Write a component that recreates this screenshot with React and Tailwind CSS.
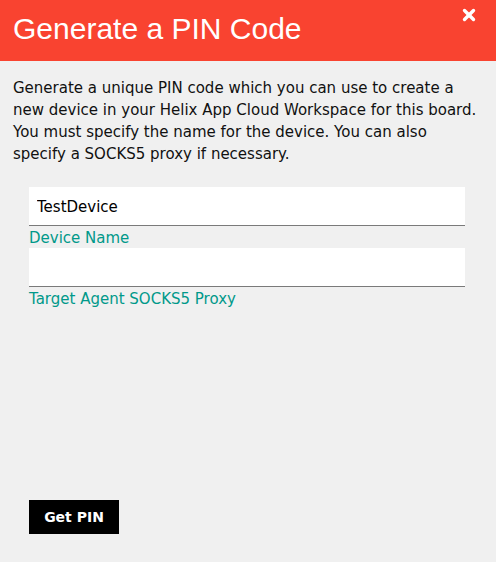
import { X } from 'lucide-react'

export default function App() {
  return (
    <div className="flex h-[562px] w-[496px] flex-col bg-[#f0f0f0] font-['DejaVu_Sans',Verdana,sans-serif]">
      <header className="relative flex h-[61px] shrink-0 items-center bg-[#f94330] px-[13px]">
        <h1 className="mt-[-3px] font-['Liberation_Sans',Arial,sans-serif] text-[30px] leading-none text-white">
          Generate a PIN Code
        </h1>
        <button className="absolute right-[18px] top-[6px] text-white" aria-label="Close">
          <X className="h-[18px] w-[18px]" strokeWidth={4.5} />
        </button>
      </header>

      <div className="flex flex-1 flex-col px-[13px] pt-[16px]">
        <p className="text-[15px] leading-[22px] text-[#111]">
          Generate a unique PIN code which you can use to create a new device in your Helix App Cloud
          Workspace for this board. You must specify the name for the device. You can also specify a
          SOCKS5 proxy if necessary.
        </p>

        <div className="mt-[22px] flex flex-col pl-[16px] pr-[18px]">
          <input
            className="h-[39px] w-full border-b border-[#7a7a7a] bg-white px-[8px] pt-[2px] text-[15px] text-black outline-none"
            defaultValue="TestDevice"
          />
          <label className="mt-[3px] text-[15px] leading-[19px] text-[#00998a]">Device Name</label>
          <input className="h-[39px] w-full border-b border-[#7a7a7a] bg-white px-[8px] text-[15px] outline-none" />
          <label className="mt-[2px] text-[15px] leading-[20px] text-[#00998a]">Target Agent SOCKS5 Proxy</label>
        </div>

        <div className="mt-auto mb-[28px] px-[16px]">
          <button className="h-[34px] w-[90px] bg-black text-[14px] font-bold text-white">Get PIN</button>
        </div>
      </div>
    </div>
  )
}
